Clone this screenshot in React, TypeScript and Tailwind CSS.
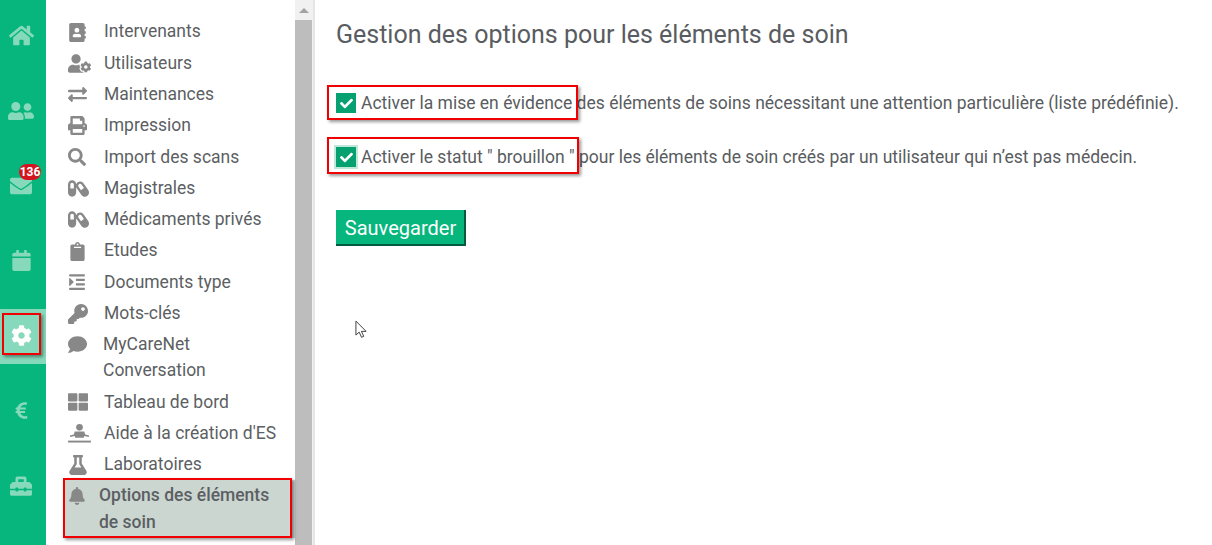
import React from 'react';
import { FaHome, FaUserFriends, FaEnvelope, FaCalendar, FaCog, FaEuroSign, FaToolbox, FaAddressBook, FaUserCog, FaExchangeAlt, FaPrint, FaSearch, FaCapsules, FaClipboard, FaIndent, FaKey, FaComment, FaThLarge, FaBell, FaFlask, FaCheck } from 'react-icons/fa';

const BedIcon = ({ className }: { className?: string }) => (
  <svg viewBox="0 0 24 20" className={className} fill="currentColor">
    <circle cx="12" cy="3.5" r="3.5" />
    <path d="M7 8h10l1 3 4 1v1.6l-5-1-.5 2h-9l-.5-2-5 1V12l4-1z" />
    <rect x="0" y="17.5" width="24" height="2" />
  </svg>
);

const railItems = [
  { icon: FaHome, size: 'text-[25px]' },
  { icon: FaUserFriends, size: 'text-[26px]' },
  { icon: FaEnvelope, size: 'text-[22px]' },
  { icon: FaCalendar, size: 'text-[21px]' },
  { icon: FaCog, size: 'text-[21px]', active: true },
  { icon: FaEuroSign, size: 'text-[19px]' },
  { icon: FaToolbox, size: 'text-[22px]' },
];

const menuItems = [
  { icon: FaAddressBook, label: 'Intervenants', size: 'text-[19px]' },
  { icon: FaUserCog, label: 'Utilisateurs', size: 'text-[23px]' },
  { icon: FaExchangeAlt, label: 'Maintenances', size: 'text-[19px]' },
  { icon: FaPrint, label: 'Impression', size: 'text-[19px]' },
  { icon: FaSearch, label: 'Import des scans', size: 'text-[18px]' },
  { icon: FaCapsules, label: 'Magistrales', size: 'text-[21px]' },
  { icon: FaCapsules, label: 'Médicaments privés', size: 'text-[21px]' },
  { icon: FaClipboard, label: 'Etudes', size: 'text-[19px]' },
  { icon: FaIndent, label: 'Documents type', size: 'text-[18px]' },
  { icon: FaKey, label: 'Mots-clés', size: 'text-[20px]' },
  { icon: FaComment, label: 'MyCareNet Conversation', size: 'text-[19px]', wrap: true },
  { icon: FaThLarge, label: 'Tableau de bord', size: 'text-[20px]' },
  { icon: BedIcon, label: "Aide à la création d'ES", size: 'w-[23px] h-[19px]' },
  { icon: FaFlask, label: 'Laboratoires', size: 'text-[20px]' },
];

const RedBox = ({ className }: { className: string }) => (
  <div className={`absolute border-[2px] border-[#f00000] shadow-[2px_2px_3px_rgba(0,0,0,0.4)] pointer-events-none ${className}`} />
);

const CheckRow = ({ text, focused }: { text: string; focused?: boolean }) => (
  <label className="flex items-center gap-[5px] h-[26px]">
    <span className={`flex items-center justify-center w-[20px] h-[20px] bg-[#06a071] text-white shrink-0 ${focused ? 'shadow-[0_0_0_2px_#bfe8d9]' : ''}`}>
      <FaCheck className="text-[13px]" />
    </span>
    <span className="whitespace-nowrap">{text}</span>
  </label>
);

const App: React.FC = () => {
  return (
    <div className="flex h-[545px] w-[1212px] overflow-hidden bg-white text-[#595c60] font-['Roboto',sans-serif] relative">
      {/* rail */}
      <div className="w-[46px] shrink-0 bg-[#06b67c] flex flex-col gap-5 pt-[9px] text-[#86dabb]">
        {railItems.map((item, i) => {
          const Icon = item.icon;
          return (
            <div key={i} className={`relative flex items-center justify-center h-[55px] shrink-0 pr-[4px] pb-[2px] ${item.active ? 'bg-[#86dabb] text-white' : ''}`}>
              <Icon className={item.size} />
              {i === 2 && (
                <span className="absolute left-[19px] top-[5px] h-[16px] w-[22px] rounded-full bg-[#d4151f] text-white text-[12px] font-bold leading-[16px] text-center">136</span>
              )}
            </div>
          );
        })}
      </div>

      {/* menu */}
      <div className="w-[249px] shrink-0 pt-[16.4px]">
        {menuItems.map(item => {
          const Icon = item.icon;
          return (
            <div key={item.label} className={`flex text-[17.5px] text-[#5c5f63] ${item.wrap ? 'leading-[26px] pt-[2px] pb-[3.2px]' : 'leading-[31.3px] h-[31.3px]'}`}>
              <span className={`${item.wrap ? 'w-[57px] h-[26px]' : 'w-[58px]'} pl-[22px] shrink-0 flex items-center text-[#888888]`}>
                <Icon className={item.size} />
              </span>
              <span className={item.wrap ? 'w-[150px]' : 'whitespace-nowrap'}>{item.label}</span>
            </div>
          );
        })}
        <div className="flex ml-[18px] h-[58px] -mt-[0.7px] bg-[#cbd6d0] text-[17.5px] font-medium leading-[27px] text-[#5c5f63] pt-[2px]">
          <span className="w-[35px] pl-[4px] pt-[5px] shrink-0 text-[#888888]">
            <FaBell className="text-[18px]" />
          </span>
          <span className="w-[185px]">Options des éléments de soin</span>
        </div>
      </div>

      {/* scrollbar */}
      <div className="w-[20px] shrink-0 bg-[#f1f1f1] border-r-2 border-[#e4e6e5] flex flex-col">
        <div className="h-[20px] flex items-center justify-center">
          <div className="w-0 h-0 border-l-[5px] border-r-[5px] border-b-[5px] border-l-transparent border-r-transparent border-b-[#a3a3a3]" />
        </div>
        <div className="flex-1 bg-[#bdbdbd] w-[17px]" />
      </div>

      {/* content */}
      <div className="flex-1 pl-[21px] pt-[20px]">
        <h1 className="text-[25px] leading-[29px] font-normal text-[#595c60]">Gestion des options pour les éléments de soin</h1>
        <div className="mt-[41px] flex flex-col gap-[28px] text-[17.5px]">
          <CheckRow text="Activer la mise en évidence des éléments de soins nécessitant une attention particulière (liste prédéfinie)." />
          <CheckRow focused text={'Activer le statut " brouillon " pour les éléments de soin créés par un utilisateur qui n’est pas médecin.'} />
        </div>
        <button className="mt-[40px] h-[36px] w-[130px] bg-[#06b67c] text-white text-[20px] pl-[1px] pt-[1px] border-r-2 border-b-2 border-[#035c40]">Sauvegarder</button>
      </div>

      {/* cursor */}
      <svg viewBox="0 0 14 20" className="absolute left-[355px] top-[320px] w-[13px] h-[19px]" fill="white" stroke="#333" strokeWidth="1">
        <path d="M1 1v15l3.5-3.2 2.5 5.6 2.4-1-2.5-5.4H12z" />
      </svg>

      {/* annotations */}
      <RedBox className="left-[2px] top-[313px] w-[39px] h-[42px]" />
      <RedBox className="left-[63px] top-[478px] w-[229px] h-[60px]" />
      <RedBox className="left-[327px] top-[85px] w-[251px] h-[35px]" />
      <RedBox className="left-[327px] top-[137px] w-[252px] h-[37px]" />
    </div>
  );
};

export default App;
